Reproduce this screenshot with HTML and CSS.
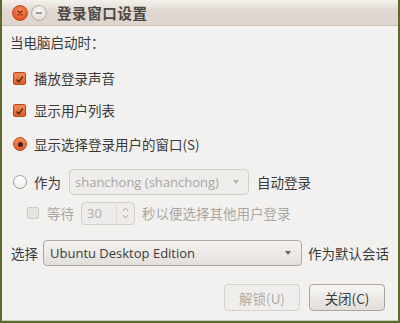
FILE: index.html
```html
<!DOCTYPE html>
<html>
<head>
<meta charset="utf-8">
<link rel="stylesheet" href="styles.css">
</head>
<body>
<div class="window">
  <div class="titlebar">
    <span class="wbtn close"><svg width="12" height="12" viewBox="0 0 12 12"><path d="M4 4 L8 8 M8 4 L4 8" stroke="#7a2a10" stroke-width="1.3" stroke-linecap="round"/></svg></span>
    <span class="wbtn min"><svg width="12" height="12" viewBox="0 0 12 12"><path d="M3 6 H9" stroke="#6a6660" stroke-width="1.2"/></svg></span>
    <span class="title">登录窗口设置</span>
  </div>
  <div class="content">
    <div class="row r1">当电脑启动时：</div>
    <div class="row r2 indent"><span class="check on"><svg width="13" height="13" viewBox="0 0 13 13"><path d="M3 6.5 L5.6 9.3 L10.4 3" fill="none" stroke="#3a2a22" stroke-width="1.6"/></svg></span><span>播放登录声音</span></div>
    <div class="row r3 indent"><span class="check on"><svg width="13" height="13" viewBox="0 0 13 13"><path d="M3 6.5 L5.6 9.3 L10.4 3" fill="none" stroke="#3a2a22" stroke-width="1.6"/></svg></span><span>显示用户列表</span></div>
    <div class="row r4 indent"><span class="radio on"><span class="dot"></span></span><span>显示选择登录用户的窗口(S)</span></div>
    <div class="row r5 indent"><span class="radio"></span><span class="lbl-as">作为</span><span class="combo disabled user"><span>shanchong (shanchong)</span><span class="arrow"></span></span><span class="after">自动登录</span></div>
    <div class="row r6 indent2 dim"><span class="check dis"></span><span class="lbl-wait">等待</span><span class="spin"><span class="val">30</span><span class="spinbtns"><svg width="7" height="16" viewBox="0 0 7 16"><path d="M1 6 L3.5 3 L6 6" fill="none" stroke="#b0aca6" stroke-width="1"/><path d="M1 10 L3.5 13 L6 10" fill="none" stroke="#b0aca6" stroke-width="1"/></svg></span></span><span class="after2">秒以便选择其他用户登录</span></div>
    <div class="row r7"><span class="lbl-sel">选择</span><span class="combo session"><span>Ubuntu Desktop Edition</span><span class="arrow dark"></span></span><span class="after3">作为默认会话</span></div>
    <div class="row r8"><span class="btn disabled">解锁(U)</span><span class="btn">关闭(C)</span></div>
  </div>
</div>
</body>
</html>
```
FILE: styles.css
```css
html, body { margin: 0; padding: 0; }
body {
  width: 400px; height: 323px; overflow: hidden;
  background: #5b6a2c;
  font-family: "Noto Sans CJK SC", "Noto Sans", sans-serif;
  font-size: 13.5px; color: #3a3a3a;
}
.window {
  margin-left: 2px; width: 396px; height: 321px;
  background: #f2f1f0;
  border-bottom: 1px solid #cfcac4;
  box-sizing: border-box;
}
.titlebar {
  height: 26px; box-sizing: border-box;
  background: linear-gradient(#f3f1ed 0px, #e9e4de 6px, #dfd7d0 12px, #ddd5ce 26px);
  border-bottom: 1px solid #cdc4bb;
  display: flex; align-items: center;
  padding-left: 10px;
}
.wbtn {
  width: 15px; height: 15px; border-radius: 50%;
  display: flex; align-items: center; justify-content: center;
  margin-right: 3px;
}
.wbtn.close {
  background: radial-gradient(circle at 50% 35%, #f78a5a, #e4582a 70%, #c9471d);
  border: 1px solid #c04a20; width: 14px; height: 14px;
}
.wbtn.min {
  background: radial-gradient(circle at 50% 35%, #fbfaf8, #e2ddd7 75%);
  border: 1px solid #b9b2aa; width: 14px; height: 14px;
}
.title {
  margin-left: 7px; font-weight: bold; font-size: 14.5px; color: #4a4744;
  letter-spacing: 0.6px;
}
.content { display: flex; flex-direction: column; padding-left: 8px; }
.row { display: flex; align-items: center; height: 24px; white-space: nowrap; }
.r1 { margin-top: 4px; }
.r2 { margin-top: 12px; }
.r3 { margin-top: 8px; }
.r4 { margin-top: 10px; }
.r5 { margin-top: 12px; height: 28px; }
.r6 { margin-top: 5px; }
.r7 { margin-top: 15px; height: 26px; }
.r8 { margin-top: 18px; height: 27px; justify-content: flex-end; padding-right: 13px; }
.indent { padding-left: 3px; }
.indent2 { padding-left: 17px; }
.check {
  width: 13px; height: 13px; box-sizing: border-box; border-radius: 2px;
  display: inline-flex; margin-right: 8px;
}
.check.on {
  background: linear-gradient(#f58a5a, #e25d2b);
  border: 1px solid #b8481f;
}
.check.dis {
  width: 12px; height: 12px; background: #e6e4e1; border: 1px solid #cdcac5; margin-right: 8px;
}
.radio {
  width: 14px; height: 14px; box-sizing: border-box; border-radius: 50%;
  background: linear-gradient(#ffffff, #f1efed);
  border: 1px solid #a49f99; margin-right: 7px;
  display: inline-flex; align-items: center; justify-content: center;
}
.radio.on {
  background: linear-gradient(#f58a5a, #e25d2b); border: 1px solid #b8481f;
}
.dot { width: 5px; height: 5px; border-radius: 50%; background: #3a2418; }
.lbl-as { margin-right: 8px; }
.combo {
  display: flex; align-items: center; justify-content: space-between;
  box-sizing: border-box; border-radius: 4px;
  font-family: "Open Sans", "Noto Sans CJK SC", sans-serif;
}
.combo.user {
  width: 180px; height: 26px; padding: 0 9px 0 5px;
  background: #efedeb; border: 1px solid #d3cfca; color: #a9a6a1; font-size: 13px;
}
.combo.session {
  width: 259px; height: 26px; padding: 0 10px 0 6px;
  background: linear-gradient(#f5f4f2, #e3dfdb);
  border: 1px solid #aea8a1; color: #3c3c3c; font-size: 13px;
}
.arrow {
  width: 0; height: 0; border-left: 3.5px solid transparent; border-right: 3.5px solid transparent;
  border-top: 4px solid #b5b1ac;
}
.arrow.dark { border-top-color: #6a6560; }
.after { margin-left: 8px; }
.dim { color: #aaa7a2; }
.lbl-wait { margin-right: 7px; }
.spin {
  width: 54px; height: 23px; box-sizing: border-box;
  border: 1px solid #d3cfca; border-radius: 4px; background: #eeecea;
  display: flex; align-items: center; justify-content: space-between;
  font-family: "Open Sans", sans-serif; color: #aeaba6; font-size: 13px;
}
.val { padding-left: 5px; }
.spinbtns { width: 17px; height: 21px; display: flex; align-items: center; justify-content: center; border-left: 1px solid #dedbd7; }
.after2 { margin-left: 7px; }
.lbl-sel { margin-left: 1px; margin-right: 5px; }
.after3 { margin-left: 6px; }
.btn {
  width: 76px; height: 27px; box-sizing: border-box; border-radius: 4px;
  display: flex; align-items: center; justify-content: center;
  background: linear-gradient(#f7f6f4, #e2ded9);
  border: 1px solid #aaa49d; margin-left: 9px;
}
.btn.disabled {
  background: #f0eeec; border: 1px solid #d5d1cc; color: #b0ada8;
}
```
